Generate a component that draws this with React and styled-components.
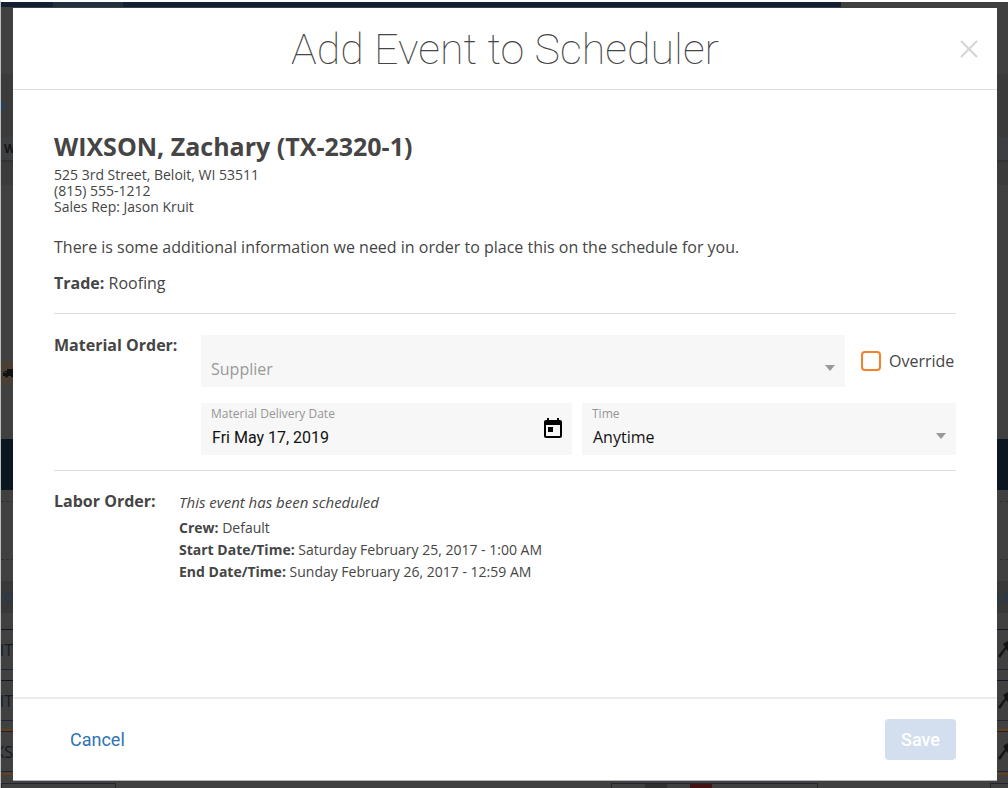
import React from 'react'
import styled, { createGlobalStyle } from 'styled-components'

const GlobalStyle = createGlobalStyle`
  *, *::before, *::after {
    box-sizing: border-box;
  }

  body {
    margin: 0;
    background: #404040;
    color: #454545;
    font-family: 'Open Sans', 'Noto Sans', sans-serif;
    font-size: 16px;
  }

  button, input, select {
    font: inherit;
    margin: 0;
  }
`

/* Dimmed page behind the dialog */

const Page = styled.div`
  height: 100vh;
  overflow: hidden;
  border-top: 2px solid #fff;
  border-left: 1px solid #b9bfbf;
  color: #131c26;
`

const NavBar = styled.div`
  display: flex;
  height: 5px;
  width: 83.4%;
  padding-left: 52px;
  background: #122033;
`

const NavTab = styled.div`
  width: 70px;
  background: #20303d;
`

const Strip = styled.div`
  display: flex;
  align-items: center;
  justify-content: space-between;
  overflow: hidden;
  white-space: nowrap;
  height: ${p => p.$h}px;
  background: ${p => p.$bg || 'transparent'};
  border-top: ${p => p.$top || 'none'};
  border-bottom: ${p => p.$bottom || 'none'};
`

const Initial = styled.span`
  padding-left: 3px;
  font-size: 12px;
  font-weight: 700;
  color: #151515;
`

const EdgeCell = styled.span`
  display: flex;
  justify-content: ${p => (p.$start ? 'flex-start' : 'flex-end')};
  width: 12px;
`

const HeadCell = styled(EdgeCell)`
  font-size: 12px;
  color: #1c3a58;
`

const Truck = styled.div`
  display: flex;
  align-items: center;
  width: 40px;
  height: 24px;
  padding-left: 2px;
  background: #4a3f34;
`

const BottomBoxes = styled.div`
  display: grid;
  grid-template-columns: 115px 1fr 207px 172px 18px;
  height: 8px;
  margin-top: 8px;
`

const Box = styled.div`
  display: flex;
  padding-left: 33px;
  gap: 23px;
  border: 1px solid #22262c;
  border-bottom: 0;
`

const Block = styled.div`
  width: 22px;
  background: ${p => p.$bg};
`

/* Dialog */

const Overlay = styled.div`
  position: fixed;
  inset: 0;
  display: flex;
  padding: 8px 11px 7px 13px;
`

const Modal = styled.section`
  display: flex;
  flex: 1;
  flex-direction: column;
  background: #fff;
  border-bottom: 1px solid #b5b5b5;
`

const Header = styled.header`
  display: grid;
  grid-template-columns: 56px 1fr 56px;
  align-items: center;
  height: 82px;
  border-bottom: 1px solid #dedede;
`

const Title = styled.h1`
  grid-column: 2;
  margin: 0;
  text-align: center;
  font-family: Roboto, sans-serif;
  font-size: 43px;
  font-weight: 100;
  line-height: 52px;
`

const CloseButton = styled.button`
  display: flex;
  justify-content: center;
  padding: 0;
  border: 0;
  background: none;
  color: #d4d4d4;
  cursor: pointer;
`

const Body = styled.div`
  flex: 1;
  padding: 40px 41px 0;
`

const CustomerName = styled.h2`
  margin: 0;
  font-size: 25px;
  line-height: 32px;
`

const Address = styled.address`
  padding-top: 5px;
  font-size: 14px;
  font-style: normal;
  line-height: 16px;
`

const Text = styled.p`
  margin: ${p => p.$gap || 0}px 0 0;
  line-height: 24px;
`

const Divider = styled.hr`
  height: 1px;
  margin: ${p => p.$m};
  border: 0;
  background: #dcdcdc;
`

const Section = styled.div`
  display: flex;
  gap: 20px;
`

const SectionLabel = styled.div`
  min-width: ${p => p.$w}px;
  font-weight: 700;
  line-height: 20px;
`

const Fields = styled.div`
  display: grid;
  flex: 1;
  gap: 16px;
`

const FieldRow = styled.div`
  display: flex;
  align-items: center;
  gap: ${p => p.$gap}px;
`

const Field = styled.label`
  display: flex;
  flex: 1 1 0;
  min-width: 0;
  align-items: center;
  height: 52px;
  padding: 0 ${p => (p.$icon ? 7 : 10)}px 0 10px;
  background: #f7f7f7;
`

const FieldMain = styled.span`
  display: flex;
  flex: 1;
  flex-direction: column;
  min-width: 0;
`

const FieldLabel = styled.span`
  font-size: 12px;
  line-height: 16px;
  color: #969696;
`

const fieldText = `
  width: 100%;
  height: 30px;
  border: 0;
  outline: 0;
  appearance: none;
  background: none;
  border-radius: 0;
`

const DateInput = styled.input`
  ${fieldText}
  padding: 0 1px;
  font-family: Roboto, sans-serif;
  color: #111;
`

const Select = styled.select`
  ${fieldText}
  padding: ${p => (p.$empty ? '0' : '0 1px')};
  margin-top: ${p => (p.$empty ? '16px' : '0')};
  color: ${p => (p.$empty ? '#999' : '#111')};
`

const Arrow = styled.span`
  margin-top: 14px;
  border: 5px solid transparent;
  border-top: 6px solid #999;
  border-bottom: 0;
`

const Check = styled.label`
  display: flex;
  align-items: center;
  gap: 8px;
  min-width: 95px;
`

const Checkbox = styled.input`
  width: 20px;
  height: 20px;
  appearance: none;
  border: 2px solid #f5822a;
  border-radius: 4px;
  background: #fff;

  &:checked {
    background: #f5822a;
  }
`

const Labor = styled.div`
  font-size: 14px;
  line-height: 22px;

  p {
    margin: 0;
  }

  em {
    display: block;
    padding-bottom: 4px;
    font-size: 15px;
  }
`

const Footer = styled.footer`
  display: flex;
  align-items: center;
  justify-content: space-between;
  height: 83px;
  padding: 0 41px;
  border-top: 2px solid #ececec;
`

const Button = styled.button`
  height: 41px;
  padding: 0 16px;
  border: 0;
  border-radius: 4px;
  font-family: Roboto, sans-serif;
  font-size: 18px;
  color: ${p => (p.$primary ? '#fff' : '#2f73b5')};
  background: ${p => (p.$primary ? '#d3deef' : 'none')};
  font-weight: ${p => (p.$primary ? 500 : 400)};
`

const CalendarIcon = () => (
  <svg width="24" height="24" viewBox="0 0 24 24" fill="#000" aria-hidden="true">
    <path d="M19 3h-1V1h-2v2H8V1H6v2H5c-1.11 0-2 .9-2 2v14c0 1.1.89 2 2 2h14c1.1 0 2-.9 2-2V5c0-1.1-.9-2-2-2zm0 16H5V8h14v11zM7 10h5v5H7z" />
  </svg>
)

const CloseIcon = () => (
  <svg width="18" height="18" viewBox="0 0 18 18" stroke="currentColor" strokeWidth="2" strokeLinecap="round">
    <path d="M1.5 1.5l15 15M16.5 1.5l-15 15" />
  </svg>
)

const HammerIcon = () => (
  <svg width="10" height="20" viewBox="0 0 10 20" fill="#141414">
    <path d="M0 16L7 7L5 4L10 1V11L8 9L2 18z" />
  </svg>
)

const TruckIcon = () => (
  <svg width="12" height="10" viewBox="0 0 12 10" fill="#111">
    <path d="M4 1h8v7h-1a1.5 1.5 0 0 1-3 0H5a1.5 1.5 0 0 1-3 0H0V5l2-2h2zM1.500 5H3.500V4H2.400z" />
  </svg>
)

const ChevronIcon = () => (
  <svg width="5" height="10" viewBox="0 0 5 10" fill="none" stroke="#1c4163" strokeWidth="2">
    <path d="M0 1l3.500 4L0 9" />
  </svg>
)

const rows = [
  { id: 1, text: 'IT' },
  { id: 2, text: 'IT' },
]

const Background = () => (
  <Page aria-hidden="true">
    <NavBar>
      <NavTab />
    </NavBar>
    <Strip $h={67} />
    <Strip $h={63} $bg="#3b3b3b">
      <ChevronIcon />
    </Strip>
    <Strip $h={25} $bg="#3e3f43" $bottom="2px solid #323232">
      <Initial>W</Initial>
    </Strip>
    <Strip $h={23} $bg="#3b3b3b" />
    <Strip $h={175} />
    <Strip $h={25}>
      <Truck>
        <TruckIcon />
      </Truck>
    </Strip>
    <Strip $h={54} />
    <Strip $h={51} $bg="#0b1620" />
    <Strip $h={12} $bottom="1px dashed #303030" />
    <Strip $h={58} $bottom="1px dashed #303030" />
    <Strip $h={21} />
    <Strip $h={32} $bg="#383838">
      <HeadCell>TO</HeadCell>
      <HeadCell $start>LA</HeadCell>
    </Strip>
    <Strip $h={16} />
    {rows.map(row => (
      <React.Fragment key={row.id}>
        <Strip $h={41} $top="1px solid #15152a" $bottom="1px solid #202633">
          <EdgeCell>{row.text}</EdgeCell>
          <HammerIcon />
        </Strip>
        <Strip $h={row.id === 1 ? 10 : 8} />
      </React.Fragment>
    ))}
    <Strip $h={2} $bg="#65401f" />
    <Strip $h={41} $top="1px solid #202020" $bottom="1px solid #202633">
      <EdgeCell>KS</EdgeCell>
      <HammerIcon />
    </Strip>
    <Strip $h={3} $bottom="2px solid #65401f" />
    <BottomBoxes>
      <Box />
      <span />
      <Box>
        <Block $bg="#303030" />
        <Block $bg="#431416" />
      </Box>
      <span />
      <Box />
    </BottomBoxes>
  </Page>
)

export default class App extends React.Component {
  state = { override: false, date: 'Fri May 17, 2019' }

  render() {
    const { override, date } = this.state
    return (
      <>
        <GlobalStyle />
        <Background />
        <Overlay>
          <Modal role="dialog" aria-labelledby="title">
            <Header>
              <Title id="title">Add Event to Scheduler</Title>
              <CloseButton type="button" aria-label="Close">
                <CloseIcon />
              </CloseButton>
            </Header>
            <Body>
              <CustomerName>WIXSON, Zachary (TX-2320-1)</CustomerName>
              <Address>
                525 3rd Street, Beloit, WI 53511
                <br />
                (815) 555-1212
                <br />
                Sales Rep: Jason Kruit
              </Address>
              <Text $gap={20}>
                There is some additional information we need in order to place this on the schedule for you.
              </Text>
              <Text $gap={12}>
                <b>Trade:</b> Roofing
              </Text>
              <Divider $m="18px 0 21px" />
              <Section>
                <SectionLabel $w={127}>Material Order:</SectionLabel>
                <Fields>
                  <FieldRow $gap={16}>
                    <Field>
                      <Select $empty aria-label="Supplier">
                        <option>Supplier</option>
                      </Select>
                      <Arrow />
                    </Field>
                    <Check>
                      <Checkbox
                        type="checkbox"
                        checked={override}
                        onChange={e => this.setState({ override: e.target.checked })}
                      />
                      Override
                    </Check>
                  </FieldRow>
                  <FieldRow $gap={10}>
                    <Field $icon>
                      <FieldMain>
                        <FieldLabel>Material Delivery Date</FieldLabel>
                        <DateInput value={date} onChange={e => this.setState({ date: e.target.value })} />
                      </FieldMain>
                      <CalendarIcon />
                    </Field>
                    <Field>
                      <FieldMain>
                        <FieldLabel>Time</FieldLabel>
                        <Select>
                          <option>Anytime</option>
                        </Select>
                      </FieldMain>
                      <Arrow />
                    </Field>
                  </FieldRow>
                </Fields>
              </Section>
              <Divider $m="15px 0 20px" />
              <Section>
                <SectionLabel $w={105}>Labor Order:</SectionLabel>
                <Labor>
                  <em>This event has been scheduled</em>
                  <p>
                    <b>Crew:</b> Default
                  </p>
                  <p>
                    <b>Start Date/Time:</b> Saturday February 25, 2017 - 1:00 AM
                  </p>
                  <p>
                    <b>End Date/Time:</b> Sunday February 26, 2017 - 12:59 AM
                  </p>
                </Labor>
              </Section>
            </Body>
            <Footer>
              <Button type="button">Cancel</Button>
              <Button type="button" $primary disabled>
                Save
              </Button>
            </Footer>
          </Modal>
        </Overlay>
      </>
    )
  }
}
